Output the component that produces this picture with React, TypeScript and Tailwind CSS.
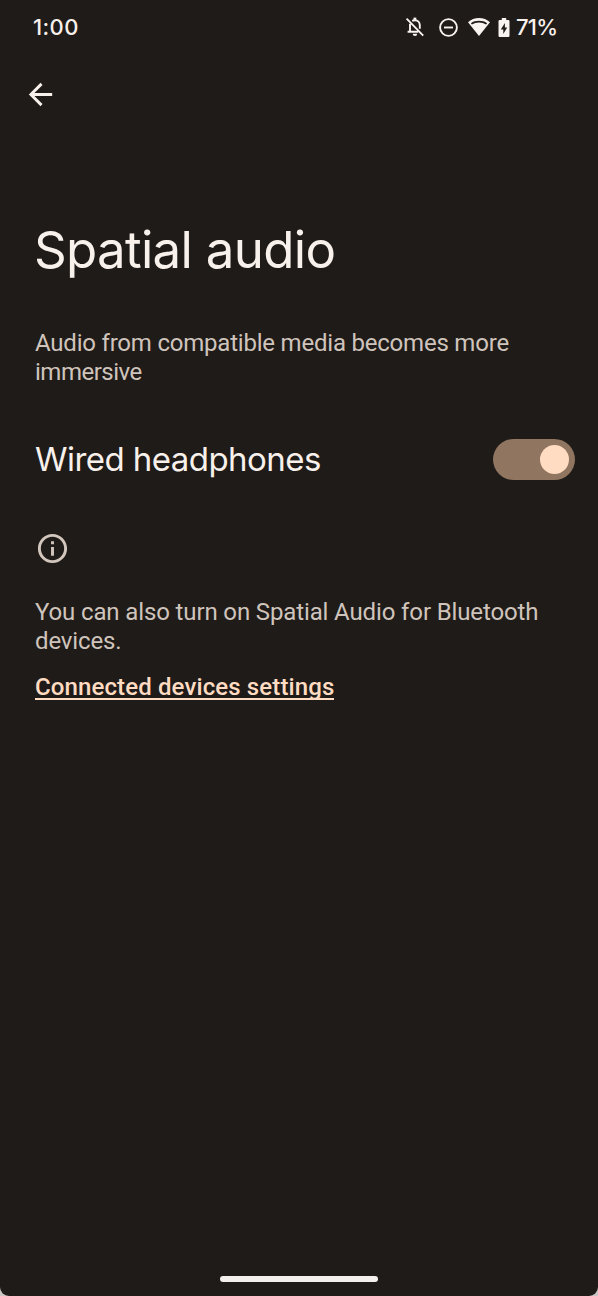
import React from "react";
import { MdArrowBack, MdOutlineInfo } from "react-icons/md";

function BellOff() {
  return (
    <svg width="20" height="22" viewBox="0 0 20 22" fill="none" stroke="#f8f3ef" strokeWidth="1.9">
      <path d="M1.6 2.6 18.2 19.6" />
      <path d="M5 7.8V15.8H13.2M2.600 15.8H5M7.2 4.9C8 4.4 8.8 4.2 9.9 4.2 12.8 4.2 14.8 6.3 14.8 9.3V12.8" />
      <path d="M9.9 1.6V4.2" strokeWidth="2.8" />
      <path d="M7.7 17.800H12.200A2.200 2.200 0 0 1 7.700 17.800Z" fill="#f8f3ef" stroke="none" />
    </svg>
  );
}

function DoNotDisturb() {
  return (
    <svg width="20" height="20" viewBox="0 0 20 20" fill="none" stroke="#f8f3ef" strokeWidth="1.9">
      <circle cx="9.5" cy="10.5" r="8.4" />
      <path d="M5 10.5H14" />
    </svg>
  );
}

function Wifi() {
  return (
    <svg width="22" height="18" viewBox="0 0 22 18">
      <path d="M11 0C6.8 0 2.9 1.6 0 4.2L11 18 22 4.2C19.1 1.6 15.200 0 11 0Z" fill="#f8f3ef" />
      <path d="M2.900 5.200C5.200 3.600 7.900 2.800 11 2.800S16.800 3.600 19.100 5.200L18.100 6.500C16 5.100 13.600 4.400 11 4.400S6 5.100 3.900 6.500Z" fill="#1f1b18" />
    </svg>
  );
}

function Battery() {
  return (
    <svg width="12" height="19" viewBox="0 0 12 19">
      <path d="M3.800 0H8.200V2H10.300Q11.500 2 11.500 3.200V17.800Q11.500 19 10.300 19H1.700Q.5 19 .5 17.800V3.200Q.5 2 1.700 2H3.800Z" fill="#f8f3ef" />
      <path d="M6.900 5 2.800 11.400H5.300V16L9.200 9.500H6.900Z" fill="#1f1b18" />
    </svg>
  );
}

export default function App() {
  return (
    <div className="h-[1296px] w-[598px] bg-[#c9c7c5]">
      <main className="flex h-full flex-col overflow-hidden rounded-b-[9px] bg-[#1f1b18] font-['Inter',sans-serif] text-[#f8f0eb]">
        <header className="flex h-[54px] shrink-0 items-center pl-[33px] pr-[41px] text-[22px] font-medium leading-none">
          <time className="w-[46px] whitespace-nowrap tracking-[0.4px]">1:00</time>
          <div className="ml-auto flex items-center">
            <BellOff />
            <span className="ml-[14px]"><DoNotDisturb /></span>
            <span className="ml-[9px]"><Wifi /></span>
            <span className="ml-[8px]"><Battery /></span>
            <span className="ml-[6px] w-[41px] whitespace-nowrap tracking-[-0.7px]">71%</span>
          </div>
        </header>
        <button aria-label="Back" className="ml-[23px] mt-[23px] flex size-[35px] items-center justify-center">
          <MdArrowBack size={35} />
        </button>
        <h1 className="ml-[34px] mt-[108px] h-[60px] whitespace-nowrap text-[51px] font-normal leading-[60px] tracking-[-0.7px]">Spatial audio</h1>
        <p className="ml-[35px] mt-[49px] whitespace-nowrap font-['Roboto',sans-serif] text-[24px] font-normal leading-[29px] tracking-[-0.21px] text-[#cfc4bc]">
          Audio from compatible media becomes more<br /><span className="tracking-[-0.5px]">immersive</span>
        </p>
        <section className="ml-[35px] mr-[23px] mt-[52px] flex h-[41px] items-center justify-between">
          <h2 className="-mt-px whitespace-nowrap text-[33px] font-normal leading-[40px] tracking-[-0.55px]">Wired headphones</h2>
          <button role="switch" aria-checked="true" aria-label="Wired headphones" className="flex h-[41px] w-[82px] items-center justify-end rounded-full bg-[#907560] pr-[6px]">
            <span className="size-[29px] rounded-full bg-[#ffdcc2]" />
          </button>
        </section>
        <MdOutlineInfo size={35} className="ml-[35px] mt-[51px] shrink-0 text-[#d3c6bd]" />
        <p className="ml-[35px] mt-[32px] whitespace-nowrap font-['Roboto',sans-serif] text-[24px] font-normal leading-[29px] tracking-[-0.13px] text-[#cfc4bc]">
          You can also turn on Spatial Audio for Bluetooth<br />devices.
        </p>
        <a className="ml-[35px] mt-[19px] h-[25px] w-[299px] whitespace-nowrap border-b-2 border-[#ffdcc2] font-['Roboto',sans-serif] text-[24px] font-medium leading-[25px] tracking-[0.12px] text-[#ffdcc2]">Connected devices settings</a>
        <div className="mb-[14px] ml-[220px] mt-auto h-[6px] w-[158px] rounded-full bg-[#f3f0ed]" />
      </main>
    </div>
  );
}
